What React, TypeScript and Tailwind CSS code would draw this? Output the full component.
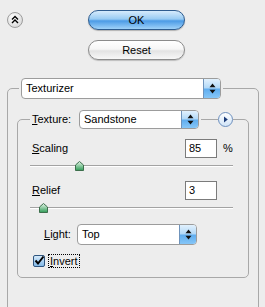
// Texturizer filter panel
import React from 'react';

function Spinner() {
  return (
    <div className="flex w-[17px] h-full items-center justify-center border-l border-[#6f93bb] bg-[linear-gradient(to_bottom,#e2f1fd_0%,#b2d9f8_47%,#5fadef_53%,#86c6f7_100%)]">
      <svg width="7" height="11" viewBox="0 0 7 11">
        <path d="M3.5 0.5L6.5 4.2H0.5Z M0.5 6.8H6.5L3.5 10.5Z" fill="#111" />
      </svg>
    </div>
  );
}

function Dropdown({ value, className }: { value: string; className: string }) {
  return (
    <div className={`flex overflow-hidden rounded-[4px] border border-[#9c9c9c] bg-white ${className}`}>
      <div className="flex flex-1 items-center pl-[4px] text-[11px] text-black">{value}</div>
      <Spinner />
    </div>
  );
}

function Thumb() {
  return (
    <svg width="9" height="10" viewBox="0 0 9 10">
      <defs>
        <linearGradient id="thumbg" x1="0" y1="0" x2="0" y2="1">
          <stop offset="0" stopColor="#e6f7ea" />
          <stop offset="1" stopColor="#2f9b56" />
        </linearGradient>
      </defs>
      <path d="M4.5 0.5L8.5 4V9.5H0.5V4Z" fill="url(#thumbg)" stroke="#3d6f4c" />
    </svg>
  );
}

function Slider({ pos }: { pos: string }) {
  return (
    <div className="relative h-[16px]">
      <div className="absolute left-0 right-0 top-[7px] h-[2px] border-t border-b border-t-[#a3a3a3] border-b-white" />
      <div className={`absolute top-[3px] ${pos}`}>
        <Thumb />
      </div>
    </div>
  );
}

function NumberBox({ value }: { value: string }) {
  return (
    <div className="flex h-[19px] w-[32px] items-center border border-[#7b7b7b] bg-white pl-[3px] text-[11px]">
      {value}
    </div>
  );
}

export default function App() {
  return (
    <div className="h-[307px] w-[265px] overflow-hidden bg-[#ededed] font-['Liberation_Sans',Arial,sans-serif] text-[11px] text-black">
      {/* top: collapse + buttons */}
      <div className="flex items-start pt-[10px]">
        <div className="ml-[7px] mt-[2px] h-[16px] w-[16px]">
          <svg width="16" height="16" viewBox="0 0 16 16">
            <defs>
              <radialGradient id="cg" cx="0.4" cy="0.35" r="0.7">
                <stop offset="0" stopColor="#ffffff" />
                <stop offset="1" stopColor="#d8d8d8" />
              </radialGradient>
            </defs>
            <circle cx="8" cy="8" r="7.5" fill="url(#cg)" stroke="#9d9d9d" />
            <path d="M5 7.5L8 4.5L11 7.5M5 11L8 8L11 11" fill="none" stroke="#000" strokeWidth="1.4" />
          </svg>
        </div>
        <div className="ml-[65px] flex flex-col gap-[10px]">
          <button className="h-[20px] w-[97px] rounded-full border border-[#2e5c8f] bg-[linear-gradient(to_bottom,#d6ebfc_0%,#98cbf3_45%,#4c9be6_55%,#9fd2f9_100%)] text-[11px] text-black shadow-[0_1px_1px_rgba(0,0,0,0.25)]">
            OK
          </button>
          <button className="h-[20px] w-[97px] rounded-full border border-[#8b8b8b] bg-[linear-gradient(to_bottom,#ffffff_0%,#f6f6f6_45%,#e3e3e3_55%,#f8f8f8_100%)] text-[11px] text-black shadow-[0_1px_1px_rgba(0,0,0,0.2)]">
            Reset
          </button>
        </div>
      </div>

      {/* outer group */}
      <fieldset className="ml-[7px] mt-[18px] w-[252px] rounded-[5px] border border-[#a8a8a8] px-[9px] pb-[40px]">
        <legend className="ml-[2px] px-[2px]">
          <Dropdown value="Texturizer" className="h-[21px] w-[200px]" />
        </legend>

        {/* inner group */}
        <fieldset className="mt-[11px] rounded-[5px] border border-[#a8a8a8] pl-[12px] pr-[15px] pb-[9px]">
          <legend className="pl-[2px]">
            <div className="flex h-[19px] items-center">
              <span className="w-[47px]">
                <span className="underline">T</span>exture:
              </span>
              <Dropdown value="Sandstone" className="h-[19px] w-[120px]" />
              <div className="ml-[2px] h-px w-[17px] bg-[#a8a8a8]" />
              <svg width="15" height="15" viewBox="0 0 15 15">
                <defs>
                  <linearGradient id="rb" x1="0" y1="0" x2="0" y2="1">
                    <stop offset="0" stopColor="#ffffff" />
                    <stop offset="1" stopColor="#cfe3f7" />
                  </linearGradient>
                </defs>
                <circle cx="7.5" cy="7.5" r="7" fill="url(#rb)" stroke="#6d8fbd" />
                <path d="M6 4.5L9.8 7.5L6 10.5Z" fill="#1b3b78" />
              </svg>
            </div>
          </legend>

          <div className="mt-[10px] flex h-[19px] items-center">
            <span className="ml-[2px] flex-1">
              <span className="underline">S</span>caling
            </span>
            <NumberBox value="85" />
            <span className="w-[16px] pl-[6px]">%</span>
          </div>
          <Slider pos="left-[45px]" />

          <div className="mt-[7px] flex h-[19px] items-center">
            <span className="ml-[2px] flex-1">
              <span className="underline">R</span>elief
            </span>
            <NumberBox value="3" />
            <span className="w-[16px]" />
          </div>
          <Slider pos="left-[9px]" />

          <div className="mt-[8px] flex h-[21px] items-center pl-[14px]">
            <span className="w-[33px]">
              <span className="underline">L</span>ight:
            </span>
            <Dropdown value="Top" className="h-[21px] w-[120px]" />
          </div>

          <div className="mt-[9px] flex h-[14px] items-center">
            <svg className="ml-[3px]" width="12" height="12" viewBox="0 0 12 12">
              <defs>
                <linearGradient id="cb" x1="0" y1="0" x2="0" y2="1">
                  <stop offset="0" stopColor="#d9ecfb" />
                  <stop offset="1" stopColor="#7fb6e6" />
                </linearGradient>
              </defs>
              <rect x="0.5" y="0.5" width="11" height="11" rx="1.5" fill="url(#cb)" stroke="#2f557f" />
              <path d="M2.5 5.5L5 8.5L10.5 1.5" fill="none" stroke="#000" strokeWidth="2" />
            </svg>
            <span className="ml-[3px] border border-dotted border-black px-[1px] leading-[12px]">
              <span className="underline">I</span>nvert
            </span>
          </div>
        </fieldset>
      </fieldset>
    </div>
  );
}
